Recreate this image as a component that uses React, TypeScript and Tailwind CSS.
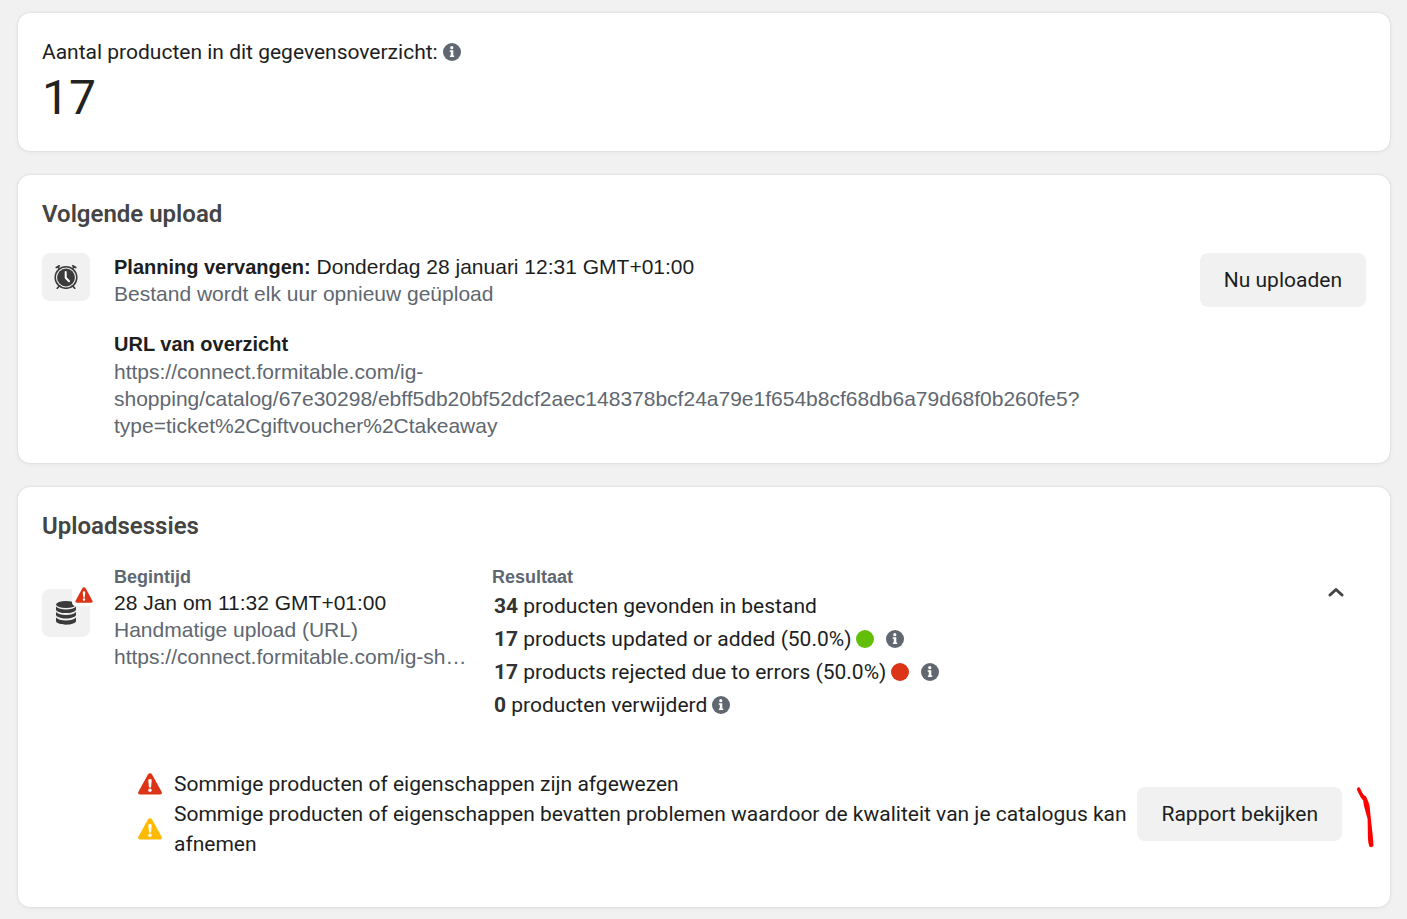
import type { ReactNode } from "react";

const feedUrl =
  "https://connect.formitable.com/ig-shopping/catalog/67e30298/ebff5db20bf52dcf2aec148378bcf24a79e1f654b8cf68db6a79d68f0b260fe5?type=ticket%2Cgiftvoucher%2Ctakeaway";

const shorten = (text: string, length: number) => `${text.slice(0, length)}…`;

function Card({ children, className = "" }: { children: ReactNode; className?: string }) {
  return (
    <section
      className={`relative rounded-xl bg-white px-6 pt-6 shadow-[0_0_2px_rgba(0,0,0,0.16),0_1px_6px_rgba(0,0,0,0.04)] ${className}`}
    >
      {children}
    </section>
  );
}

function InfoButton() {
  return (
    <button type="button" aria-label="Meer informatie" className="block shrink-0">
      <svg viewBox="0 0 18 18" className="size-[18px]" aria-hidden="true">
        <circle cx="9" cy="9" r="9" fill="#606770" />
        <circle cx="8.8" cy="4.700" r="1.600" fill="#fff" />
        <path d="M6.700 7.300h3.600v5.300h.900v1.500H6.900v-1.500h.9V8.800H6.700z" fill="#fff" />
      </svg>
    </button>
  );
}

function WarningIcon({ className }: { className: string }) {
  return (
    <svg viewBox="0 0 24 22" className={className} aria-hidden="true">
      <path
        d="M9.900 1.500a2.400 2.400 0 0 1 4.200 0l9.500 17.300c.8 1.300 0 2.700-1.500 2.700H1.900C.4 21.500-.4 20.100.4 18.800z"
        fill="currentColor"
      />
      <path d="M10.300 7.300a1.700 1.400 0 0 1 3.400 0l-.6 6.400a1.100 1 0 0 1-2.200 0z" fill="#fff" />
      <circle cx="12" cy="17.300" r="1.700" fill="#fff" />
    </svg>
  );
}

function ClockIcon() {
  return (
    <svg viewBox="0 0 24 24" className="size-6" fill="none" stroke="#3b3b3b" aria-hidden="true">
      <circle cx="12" cy="12.500" r="10.800" strokeWidth="1.500" />
      <circle cx="12" cy="12.500" r="8.900" fill="#3b3b3b" stroke="none" />
      <path d="M2.300 2.600 5.300.8M21.700 2.600 18.700.8M5.500 20.800l-2.200 2.500M18.500 20.800l2.200 2.500M5 3.200l-1-1M19 3.200l1-1" strokeWidth="1.700" strokeLinecap="round" />
      <path d="M11.700 7v5.800l3.300 3.500" stroke="#fff" strokeWidth="2" strokeLinecap="round" strokeLinejoin="round" />
    </svg>
  );
}

function DatabaseIcon() {
  return (
    <svg viewBox="0 0 20 24" className="h-6 w-5" fill="#3b3b3b" aria-hidden="true">
      <ellipse cx="10" cy="3.500" rx="10" ry="3.500" />
      <path d="M0 5.600c1.700 2 5.500 2.900 10 2.900s8.300-.9 10-2.900v2.800c0 2-4.500 3.700-10 3.700S0 10.400 0 8.400z" />
      <path d="M0 11c1.700 2 5.500 2.900 10 2.900s8.300-.9 10-2.900v2.800c0 2-4.500 3.700-10 3.700S0 15.800 0 13.800z" />
      <path d="M0 16.500c1.700 2 5.500 2.900 10 2.900s8.300-.9 10-2.900v3.600c0 2-4.500 3.700-10 3.700S0 22.100 0 20.100z" />
    </svg>
  );
}

function GreyButton({ children }: { children: ReactNode }) {
  return (
    <button
      type="button"
      className="h-[54px] shrink-0 rounded-lg bg-[#f1f1f1] px-6 text-[21px] leading-[30px] whitespace-nowrap text-[#1c1e21]"
    >
      {children}
    </button>
  );
}

function Result({ count, text, dot, info }: { count: number; text: string; dot?: string; info?: boolean }) {
  return (
    <li className="flex h-[33px] items-center gap-[5px] leading-8">
      <span>
        <b className="font-bold text-[#333]">{count}</b> {text}
      </span>
      {dot && <span className={`mr-[7px] size-[18px] shrink-0 rounded-full ${dot}`} />}
      {info && <InfoButton />}
    </li>
  );
}

export default function App() {
  return (
    <main className="flex min-h-screen flex-col gap-6 bg-[#f1f1f1] pt-[13px] pr-[17px] pb-3 pl-[18px] font-[Roboto,sans-serif] text-[21px] text-[#1c1e21]">
      <Card className="pb-[22px]">
        <div className="flex h-[30px] items-center gap-[5px] leading-[30px]">
          <span>Aantal producten in dit gegevensoverzicht:</span>
          <InfoButton />
        </div>
        <p className="text-5xl leading-[62px] text-[#222]">17</p>
      </Card>

      <Card className="pb-6">
        <h2 className="text-2xl leading-[30px] font-semibold text-[#444]">Volgende upload</h2>
        <div className="mt-6 flex items-start gap-6">
          <div className="flex size-12 shrink-0 items-center justify-center rounded-lg bg-[#f1f1f1]">
            <ClockIcon />
          </div>
          <div className="min-w-0 flex-1 font-['Liberation_Sans',sans-serif] leading-[27px]">
            <p>
              <b className="text-xl leading-none">Planning vervangen:</b> Donderdag 28 januari 12:31 GMT+01:00
            </p>
            <p className="text-[#606770]">Bestand wordt elk uur opnieuw geüpload</p>
            <h3 className="mt-6 text-xl leading-[27px] font-bold">URL van overzicht</h3>
            <p className="text-[#606770]">{feedUrl}</p>
          </div>
          <GreyButton>Nu uploaden</GreyButton>
        </div>
      </Card>

      <Card className="pb-12">
        <h2 className="text-2xl leading-[30px] font-semibold text-[#444]">Uploadsessies</h2>
        <div className="mt-6 flex items-start gap-6">
          <div className="relative mt-6 flex size-12 shrink-0 items-center justify-center rounded-lg bg-[#f1f1f1]">
            <DatabaseIcon />
            <span className="absolute -top-1 -right-1 rounded-bl-sm bg-white pt-0.5 pr-px pb-[3px] pl-[3px] text-[#dc3416]">
              <WarningIcon className="h-4 w-[18px]" />
            </span>
          </div>
          <div className="w-[354px] font-['Liberation_Sans',sans-serif] leading-[27px]">
            <h3 className="text-lg leading-6 font-bold text-[#606770]">Begintijd</h3>
            <p>28 Jan om 11:32 GMT+01:00</p>
            <p className="text-[#606770]">Handmatige upload (URL)</p>
            <p className="text-[#606770]" title={feedUrl}>
              {shorten(feedUrl, 36)}
            </p>
          </div>
          <div className="min-w-0 flex-1">
            <h3 className="font-['Liberation_Sans',sans-serif] text-lg leading-6 font-bold text-[#606770]">
              Resultaat
            </h3>
            <ul className="pl-0.5">
              <Result count={34} text="producten gevonden in bestand" />
              <Result count={17} text="products updated or added (50.0%)" dot="bg-[#63be09]" info />
              <Result count={17} text="products rejected due to errors (50.0%)" dot="bg-[#dc3416]" info />
              <Result count={0} text="producten verwijderd" info />
            </ul>
          </div>
          <button type="button" aria-label="Inklappen" aria-expanded="true" className="mt-3 mr-[18px] flex h-[30px] w-6 items-center justify-center">
            <svg viewBox="0 0 16 10" className="h-2.5 w-4" fill="none" aria-hidden="true">
              <path d="m2 8 6-5.500L14 8" stroke="#444" strokeWidth="3" strokeLinecap="round" strokeLinejoin="round" />
            </svg>
          </button>
        </div>

        <div className="mt-12 mr-6 ml-24 flex items-center gap-2">
          <ul className="min-w-0 flex-1 leading-[30px]">
            <li className="flex items-center gap-3">
              <WarningIcon className="h-[22px] w-6 shrink-0 text-[#dc3416]" />
              <span>Sommige producten of eigenschappen zijn afgewezen</span>
            </li>
            <li className="flex items-center gap-3">
              <WarningIcon className="h-[22px] w-6 shrink-0 text-[#ffba00]" />
              <span>
                Sommige producten of eigenschappen bevatten problemen waardoor de kwaliteit van je catalogus kan
                afnemen
              </span>
            </li>
          </ul>
          <GreyButton>Rapport bekijken</GreyButton>
        </div>

        <svg viewBox="0 0 18 62" className="absolute right-4 bottom-[59px] h-[62px] w-[18px]" aria-hidden="true">
          <path
            d="M1.200 2.200C1.800.900 3.600 1 4.200 2.500L6.200 6.800 8.500 9.800c1-.2 2 .6 2 1.900 1.300 2.600 2.800 5.800 3.200 9.300l1.500 15 1.400 12 .9 11c0 2.600-4 2.900-4.400.5-.9-2.500-1-5.500-1.200-8.500L11.600 33 9.500 25.500 7.800 19 7.200 14.500 4.800 11.500 2.500 7 1 4z"
            fill="#ff0000"
          />
        </svg>
      </Card>
    </main>
  );
}
